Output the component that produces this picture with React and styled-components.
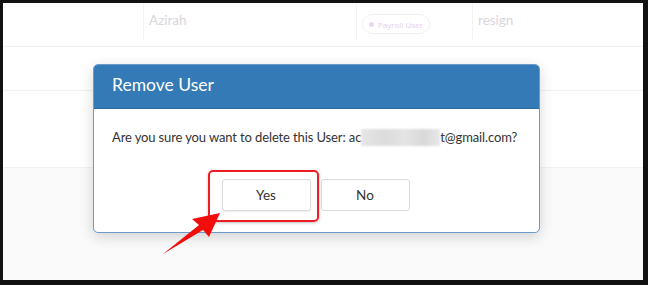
import React from "react";
import styled, { createGlobalStyle } from "styled-components";

const Global = createGlobalStyle`
  html, body { margin: 0; padding: 0; background: #111; }
  * { box-sizing: border-box; }
`;

const Frame = styled.div`
  width: 648px;
  height: 285px;
  border: 3px solid #111;
  border-right-width: 5px;
  border-bottom-width: 5px;
  background: #fafafa;
  position: relative;
  overflow: hidden;
  font-family: "Lato", "Open Sans", sans-serif;
`;

const Table = styled.div`
  display: flex;
  flex-direction: column;
  background: #fff;
`;

const Row = styled.div`
  display: flex;
  height: ${(p) => p.$h}px;
  border-bottom: 1px solid #f1f1f1;
`;

const Cell = styled.div`
  width: ${(p) => (p.$w ? `${p.$w}px` : "auto")};
  flex: ${(p) => (p.$w ? "none" : "1")};
  display: flex;
  align-items: flex-start;
  padding: ${(p) => p.$pad || "11px 5px"};
  border-left: ${(p) => (p.$div ? "1px solid #f3f3f3" : "none")};
  margin-bottom: 6px;
  color: #d9d6dc;
  font-size: 13.5px;
`;

const Badge = styled.span`
  display: inline-flex;
  align-items: center;
  gap: 4px;
  height: 20px;
  padding: 0 6px;
  border: 1px solid #f4eef4;
  border-radius: 10px;
  color: #e3d2e6;
  font-family: "Open Sans", sans-serif;
  font-size: 8px;
  font-weight: 400;
  &::before {
    content: "";
    width: 5px;
    height: 5px;
    border-radius: 50%;
    background: #ead7ee;
  }
`;

const Modal = styled.div`
  position: absolute;
  left: 90px;
  top: 61px;
  width: 447px;
  height: 169px;
  border: 1px solid #6c9bc9;
  border-radius: 5px;
  background: #fff;
  box-shadow: 0 4px 14px rgba(0, 0, 0, 0.16);
`;

const Header = styled.div`
  height: 44px;
  background: #337ab7;
  border-radius: 4px 4px 0 0;
  color: #fff;
  font-size: 17.5px;
  padding: 9px 18px 0;
  border-bottom: 1px solid #2e6da4;
`;

const Body = styled.div`
  position: relative;
  padding: 19px 18px 0;
  color: #333;
  font-size: 13px;
`;

const Message = styled.p`
  margin: 0;
  line-height: 18px;
  white-space: nowrap;
  letter-spacing: -0.12px;
`;

const Blur = styled.span`
  display: inline-block;
  width: 79px;
  height: 17px;
  vertical-align: -4px;
  background: linear-gradient(90deg, #e6e6e6 0%, #dcdcdc 30%, #e4e4e4 55%, #d9d9d9 80%, #e8e8e8 100%);
  filter: blur(1px);
`;

const Actions = styled.div`
  display: flex;
  justify-content: center;
  gap: 10px;
  margin-top: 33px;
  padding-right: 2px;
`;

const Button = styled.button`
  width: 89px;
  height: 32px;
  background: #fff;
  border: 1px solid #dcdcdc;
  border-radius: 3px;
  color: #333;
  font-family: "Lato", "Open Sans", sans-serif;
  font-size: 13.5px;
  cursor: pointer;
  box-shadow: ${(p) => (p.$raised ? "0 1px 2px rgba(0,0,0,0.08)" : "none")};
`;

const Highlight = styled.div`
  position: absolute;
  left: 114px;
  top: 61px;
  width: 111px;
  height: 52px;
  border: 2px solid #ee1c24;
  border-radius: 5px;
  box-shadow: 0 1px 3px rgba(0, 0, 0, 0.25);
  pointer-events: none;
`;

const Arrow = styled.svg`
  position: absolute;
  left: 0;
  top: 0;
  width: 648px;
  height: 285px;
  pointer-events: none;
`;

export default function App() {
  return (
    <>
      <Global />
      <Frame>
        <Table>
          <Row $h={44}>
            <Cell $w={140} />
            <Cell $w={213} $div $pad="9px 5px">Azirah</Cell>
            <Cell $w={116} $div $pad="11px 5px">
              <Badge>Payroll User</Badge>
            </Cell>
            <Cell $div $pad="9px 5px">resign</Cell>
          </Row>
          <Row $h={44} />
          <Row $h={77} />
        </Table>
        <Modal>
          <Header>Remove User</Header>
          <Body>
            <Message>
              Are you sure you want to delete this User: ac<Blur />t@gmail.com?
            </Message>
            <Actions>
              <Button $raised>Yes</Button>
              <Button>No</Button>
            </Actions>
            <Highlight />
          </Body>
        </Modal>
        <Arrow viewBox="0 0 648 285">
          <g transform="translate(-3,-3)">
            <polygon
              points="163,254 199,225 192,219 220,213 209,237 203,230"
              fill="#f20d0d"
            />
          </g>
        </Arrow>
      </Frame>
    </>
  );
}
